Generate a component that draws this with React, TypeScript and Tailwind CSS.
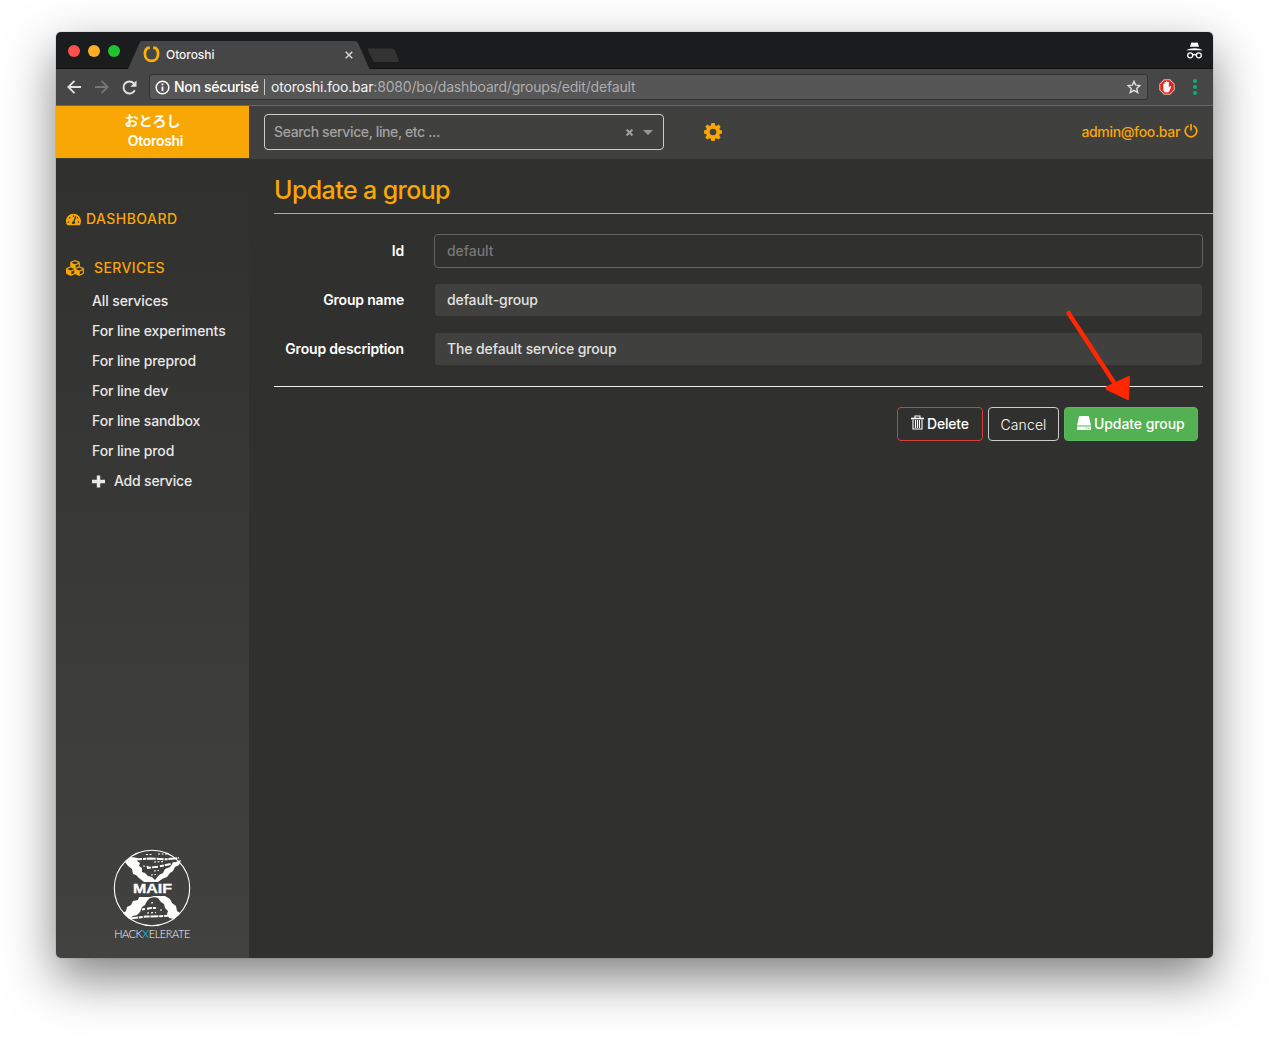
import { FaTachometerAlt, FaCubes } from "react-icons/fa";

const LINKS = [
  "All services",
  "For line experiments",
  "For line preprod",
  "For line dev",
  "For line sandbox",
  "For line prod",
];

function Favicon() {
  return (
    <svg className="ml-[15px] h-[17px] w-[17px]" viewBox="0 0 17 17" fill="none" stroke="#fbb200" strokeWidth="3">
      <path d="M6.800 1.800H4.600C2.800 3 1.900 5.200 1.900 7.700c0 4.500 2.700 7.200 6.600 7.200s6.600-2.700 6.600-7.200c0-2.500-.9-4.700-2.700-5.900h-2.200" strokeWidth="2.700" />
    </svg>
  );
}

function TabStrip() {
  return (
    <div className="relative flex h-[37px] items-center bg-[#1b1c1e] border-b border-[#111213]">
      <div className="flex w-[72px] gap-2 pl-3 pt-[2px]">
        <span className="h-3 w-3 rounded-full bg-[#ff5049]" />
        <span className="h-3 w-3 rounded-full bg-[#fdb025]" />
        <span className="h-3 w-3 rounded-full bg-[#1fc22f]" />
      </div>
      <svg className="absolute left-[70px] top-[8px] h-[29px] w-[280px]" viewBox="0 0 280 29">
        <path d="M2 29 14 2Q15 1 16.500 1H229Q231 1 232 3L243.500 29Z" fill="#464646" />
        <path d="M242 10Q241 8.500 243 8.500H266Q268 8.500 269 10.500L273 20.500Q273.500 22 271 22H249Q247.500 22 246.500 20Z" fill="#333333" />
      </svg>
      <div className="relative flex w-[290px] items-center pt-[9px]">
        <Favicon />
        <span className="ml-[6px] font-['Inter'] text-[12px] font-medium leading-4 tracking-[-0.050px] text-[#f4f4f4]">Otoroshi</span>
        <svg className="ml-auto mr-[65px] h-[8px] w-[8px]" viewBox="0 0 9 9" stroke="#d4d4d4" strokeWidth="1.700">
          <path d="M.8.800l7.400 7.400M8.200.800.800 8.200" />
        </svg>
      </div>
      <svg className="ml-auto mr-[10px] h-[17px] w-[17px]" viewBox="0 0 17 17" fill="none" stroke="#fff" strokeWidth="1.300">
        <path d="M4 4.800 5.200.8Q6 .2 8.500.8 11 .2 11.800.8L13 4.800Z" fill="#fff" stroke="none" />
        <path d="M0 8.200Q3 6.200 8.500 6.200T17 8.200Z" fill="#fff" stroke="none" />
        <circle cx="4.200" cy="13.300" r="2.500" />
        <circle cx="12.800" cy="13.300" r="2.500" />
        <path d="M6.700 13q1.800-1 3.600 0" />
      </svg>
    </div>
  );
}

function AddressBar() {
  return (
    <div className="flex h-[37px] items-center border-b border-[#666] bg-[#464646]">
      <svg className="ml-[11px] h-[14px] w-[14px]" viewBox="0 0 14 14" fill="none" stroke="#e2e2e2" strokeWidth="1.800">
        <path d="M14 7H1.500M7.500.8 1.300 7l6.200 6.200" />
      </svg>
      <svg className="ml-[14px] h-[14px] w-[14px]" viewBox="0 0 14 14" fill="none" stroke="#777" strokeWidth="1.800">
        <path d="M0 7h12.500M6.500.8 12.700 7l-6.200 6.200" />
      </svg>
      <svg className="ml-[13px] mr-px h-[15px] w-[15px]" viewBox="0 0 15 15" fill="none" stroke="#e2e2e2" strokeWidth="1.900">
        <path d="M12.800 10.300A6 6 0 1 1 12 3.500" />
        <path d="M14.500.5v6.200H8.300Z" fill="#e2e2e2" stroke="none" />
      </svg>
      <div className="ml-[11px] flex h-[26px] w-[999px] items-center rounded-[3px] border border-[#333] bg-[#565656] font-['Inter'] text-[14px] leading-5">
        <svg className="ml-[5px] h-[15px] w-[15px]" viewBox="0 0 15 15" fill="none" stroke="#fff" strokeWidth="1.500">
          <circle cx="7.500" cy="7.500" r="6.300" />
          <path d="M7.500 6.500v4.800M7.500 3.500v1.800" strokeWidth="1.800" />
        </svg>
        <span className="ml-[4px] w-[85px] whitespace-nowrap font-medium tracking-[-0.300px] text-white">Non sécurisé</span>
        <span className="ml-[5px] h-4 w-px bg-[#c8c8c8]" />
        <span className="ml-[6px] whitespace-nowrap font-normal tracking-[-0.180px] text-[#adadad]"><span className="text-[#f4f4f4]">otoroshi.foo.bar</span>:8080/bo/dashboard/groups/edit/default</span>
        <svg className="ml-auto mr-[6px] h-[14px] w-[14px]" viewBox="0 0 14 14" fill="none" stroke="#dedede" strokeWidth="1.400">
          <path d="M7 1.400 8.700 5.200l4.200.4-3.200 2.800 1 4.100L7 10.300l-3.700 2.200 1-4.100L1.100 5.600l4.200-.4Z" />
        </svg>
      </div>
      <svg className="ml-[11px] h-4 w-4" viewBox="0 0 16 16">
        <path d="M4.900.3h6.200l4.600 4.600v6.200l-4.600 4.600H4.900L.3 11.100V4.900Z" fill="#e9b8b4" />
        <path d="M5.300 1.300h5.400l4 4v5.400l-4 4H5.300l-4-4V5.300Z" fill="#e3241b" />
        <path d="M4.300 5q.7-.9 1.300 0V3.300q.7-.9 1.300 0v-.7q.8-.9 1.500 0v.7q.8-.9 1.500 0v5.200l1-1.300q1-.6 1.400.3l-1.900 4.700q-.8 1.300-2.800 1.300-3.300 0-3.300-3.400Z" fill="#f5f5f5" />
      </svg>
      <div className="ml-[18px] flex w-[4px] flex-col gap-[2px]">
        <i className="h-[4px] w-[4px] rounded-full bg-[#10ad7b]" />
        <i className="h-[4px] w-[4px] rounded-full bg-[#10ad7b]" />
        <i className="h-[4px] w-[4px] rounded-full bg-[#10ad7b]" />
      </div>
    </div>
  );
}

function Navbar() {
  return (
    <header className="flex h-[53px] items-center bg-[#40403e] pb-px">
      <div className="flex h-full w-[193px] flex-col items-center bg-[#f9a704] pt-[4px] text-center text-[14px] leading-[20px] text-white">
        <span className="font-['Noto_Sans_CJK_JP',sans-serif] font-bold">おとろし</span>
        <span className="ml-[6px] mt-px font-semibold tracking-[-0.300px]">Otoroshi</span>
      </div>
      <div className="ml-[15px] flex h-[36px] w-[400px] items-center rounded border border-[#ccc] pl-[9px] text-[#a2a2a1]">
        <span className="tracking-[-0.380px]">Search service, line, etc ...</span>
        <svg className="ml-auto h-[7px] w-[7px]" viewBox="0 0 7 7" stroke="#a2a2a1" strokeWidth="2">
          <path d="M.6.600l5.800 5.800M6.400.600.600 6.400" />
        </svg>
        <svg className="ml-[10px] mr-[10px] h-[5px] w-[10px]" viewBox="0 0 10 5"><path d="M0 0h10L5 5Z" fill="#999" /></svg>
      </div>
      <svg className="ml-[40px] h-[18px] w-[18px]" viewBox="0 0 18 18" fill="#f9a704">
        <path fillRule="evenodd" d="M7.300 0h3.400l.5 2.400 1.300.5 2-1.400 2.200 2.200-1.300 2.100.5 1.300 2.100.5v2.900l-2.200.6-.5 1.300 1.300 2.100-2.200 2.100-2-1.300-1.300.5-.5 2.200H7.300l-.5-2.200-1.300-.5-2.100 1.300-2.100-2.200 1.300-2-.5-1.300L0 10.600V7.600l2.200-.6.500-1.300-1.400-2.100 2.200-2.100 2 1.400 1.300-.5ZM9 5.700A3.300 3.300 0 1 0 9 12.300 3.300 3.300 0 0 0 9 5.700Z" />
      </svg>
      <span className="ml-auto tracking-[-0.340px] text-[#f9a704]">admin@foo.bar</span>
      <svg className="mb-[2px] ml-[4px] mr-[15px] h-[14px] w-[14px]" viewBox="0 0 14 14" fill="none" stroke="#f9a704" strokeWidth="1.700">
        <path d="M4.600 1.700a5.800 5.800 0 1 0 4.800 0M7 0v6.500" />
      </svg>
    </header>
  );
}

function MaifLogo() {
  return (
    <div className="w-[78px]">
      <svg className="h-[78px] w-[78px]" viewBox="0 0 78 78">
        <circle cx="39" cy="39" r="37.700" fill="none" stroke="#fff" strokeWidth="1.100" />
        <g fill="#fff">
          <path d="m12 13 6-5 7 1-1 3 3 2-1 3 3 2v4l3 1 3 3 4 1 3 3 4-5 4-2 2-4 5-2 3-4 8-3-2 5-4 2-2 4-3 2-3 4-5 2-4 3H31l-5-4-3-3-3-1-1-5-4-3Z" />
          <path d="M30 48h12l-5 1-3 3-2 4-3 2-2 5-3 3-4 1-4 3-6-6 3-2 1-4 4-2 2-4 5-1 1-3Z" />
          <path d="M37 47h15l5 3 2 4 4 3 1 5 3 2-6 6-5-1-2-4 1-3-3-3-1-4-3-2-3-4-4-1Z" />
        </g>
        <g fill="none" stroke="#fff">
          <path d="M22 10.500 37 9.500l16 .8 13-1.300" strokeWidth="2" strokeDasharray="7 1 3 .7 9 1" />
          <path d="m34 19 12-1.500L62 14" strokeWidth="2" strokeDasharray="4 1 6 2" />
          <path d="m30 17 6 .5M38 26l5-.500M41 13l10-.4M33 5.500h6M45 5h9M41 22l5-.5" strokeWidth="1" strokeDasharray="2 1.500" />
          <path d="m17 69.500 16-2 14-.2 15-1" strokeWidth="2" strokeDasharray="8 .8 4 1 6 .7" />
          <path d="m29 60.500 9-1.500h7" strokeWidth="2" strokeDasharray="3 2 5 1" />
          <path d="m38 54 2-.3M34 64l9-.5M47 61h4" strokeWidth="1.200" strokeDasharray="2 2" />
        </g>
        <text x="20" y="43.500" textLength="39" lengthAdjust="spacingAndGlyphs" fontFamily="Liberation Sans" fontSize="12.500" fontWeight="700" fill="#fff" stroke="#fff" strokeWidth=".3">MAIF</text>
      </svg>
      <p className="whitespace-nowrap text-center font-['Lato'] text-[11px] font-light leading-[14px] tracking-[-0.450px] text-[#f4f4f4]">HACK<span className="font-normal text-[#0aa5c4]">X</span>ELERATE</p>
    </div>
  );
}

function Sidebar() {
  return (
    <aside className="flex w-[193px] flex-col bg-linear-to-b from-[#30302e] to-[#424240]">
      <div className="mt-[50px] flex h-5 items-center pl-[10px] tracking-[0.500px] text-[#f9a704]">
        <FaTachometerAlt size={15} className="mr-[5px]" /><span className="tracking-[0.450px]">DASHBOARD</span>
      </div>
      <div className="mt-[29px] flex h-5 items-center pl-[10px] text-[#f9a704]">
        <FaCubes size={18} className="mr-[10px]" /><span className="tracking-[0.400px]">SERVICES</span>
      </div>
      <nav className="mt-[8px] flex flex-col pl-[36px] text-[#e8e8e8]">
        {LINKS.map((l) => (
          <a key={l} className="h-[30px] leading-[30px] tracking-[-0.110px]">{l}</a>
        ))}
        <a className="flex h-[30px] items-center tracking-[-0.200px]">
          <svg className="mr-[9px] h-[13px] w-[13px]" viewBox="0 0 13 13" fill="#e8e8e8"><path d="M4.800.500h3.400v4.300H13v3.400H8.200v4.300H4.800V8.200H0V4.800h4.800Z" /></svg>
          Add service
        </a>
      </nav>
      <div className="mb-[17px] ml-[57px] mt-auto"><MaifLogo /></div>
    </aside>
  );
}

function Field({ label, value, disabled }: { label: string; value: string; disabled?: boolean }) {
  return (
    <div className="mb-[15px] flex h-[34px] items-center">
      <label className="w-[130px] whitespace-nowrap text-right font-semibold tracking-[-0.180px] text-white">{label}</label>
      <div className={disabled
        ? "ml-[30px] flex h-[34px] w-[769px] items-center rounded border border-[#646463] pl-[12px] tracking-[-0.050px] text-[#777776]"
        : "ml-[31px] flex h-[32px] w-[767px] items-center rounded-[3px] bg-[#40403e] pl-[12px] tracking-[-0.120px] text-[#e2e2e1]"}>
        {value}
      </div>
    </div>
  );
}

function Main() {
  return (
    <main className="relative flex-1 bg-[#30302e] pl-[25px]">
      <h1 className="h-[55px] border-b border-[#f9a704] pt-[16px] text-[25px] leading-[30px] tracking-[-0.600px] text-[#f9a704]">Update a group</h1>
      <form className="mr-[10px] mt-[20px]">
        <Field label="Id" value="default" disabled />
        <Field label="Group name" value="default-group" />
        <Field label="Group description" value="The default service group" />
        <div className="mt-[20px] border-t border-[#eee]" />
        <div className="mr-[5px] mt-5 flex justify-end gap-[5px] text-white">
          <button type="button" className="flex h-[34px] w-[86px] items-center rounded border border-[#d43f3a] pl-[13px] tracking-[-0.200px]">
            <svg className="mb-[3px] mr-[3px] h-[15px] w-[13px]" viewBox="0 0 13 15" fill="none" stroke="#fff" strokeWidth="1.100">
              <path d="M0 3.500h13" strokeWidth="1.600" /><path d="M4 3V1h5v2M2 4.500V14h9V4.500M4.500 5v8M6.500 5v8M8.500 5v8" />
            </svg>
            Delete
          </button>
          <button type="button" className="h-[34px] w-[71px] rounded border border-[#ccc] pt-[2px] font-light tracking-[0.100px]">Cancel</button>
          <button type="button" className="flex h-[34px] w-[134px] items-center rounded border border-[#5cb85c] bg-[#53b053] pl-[12px] tracking-[-0.080px]">
            <svg className="mb-[2px] mr-[3px] h-[14px] w-[14px]" viewBox="0 0 14 14" fill="#fff">
              <path d="M3 0h8q.8 0 1 .8L14 9.500H0L2 .8Q2.200 0 3 0Z" /><path fillRule="evenodd" d="M0 10.500h14V14H0ZM9 11.700v1h1v-1Zm2.300 0v1h1v-1Z" />
            </svg>
            Update group
          </button>
        </div>
      </form>
      <svg className="absolute left-[815px] top-[149px] h-[95px] w-[70px]" viewBox="0 0 70 95">
        <path d="M4.500 5 51 76" stroke="#ff2600" strokeWidth="4.400" strokeLinecap="round" />
        <path d="m65 69-1 22-21-10-.5-1.500Z" fill="#ff2600" stroke="#ff2600" strokeWidth="2" strokeLinejoin="round" />
      </svg>
    </main>
  );
}

export default function App() {
  return (
    <div className="h-[1038px] w-[1269px] overflow-hidden bg-white pl-[56px] pt-[32px] font-['Inter',sans-serif] text-[14px] font-medium leading-5">
      <div className="flex h-[926px] w-[1157px] flex-col overflow-hidden rounded-[5px] shadow-[0_20px_50px_rgba(0,0,0,0.5),0_0_1px_rgba(0,0,0,0.6)]">
        <TabStrip />
        <AddressBar />
        <Navbar />
        <div className="flex flex-1">
          <Sidebar />
          <Main />
        </div>
      </div>
    </div>
  );
}
